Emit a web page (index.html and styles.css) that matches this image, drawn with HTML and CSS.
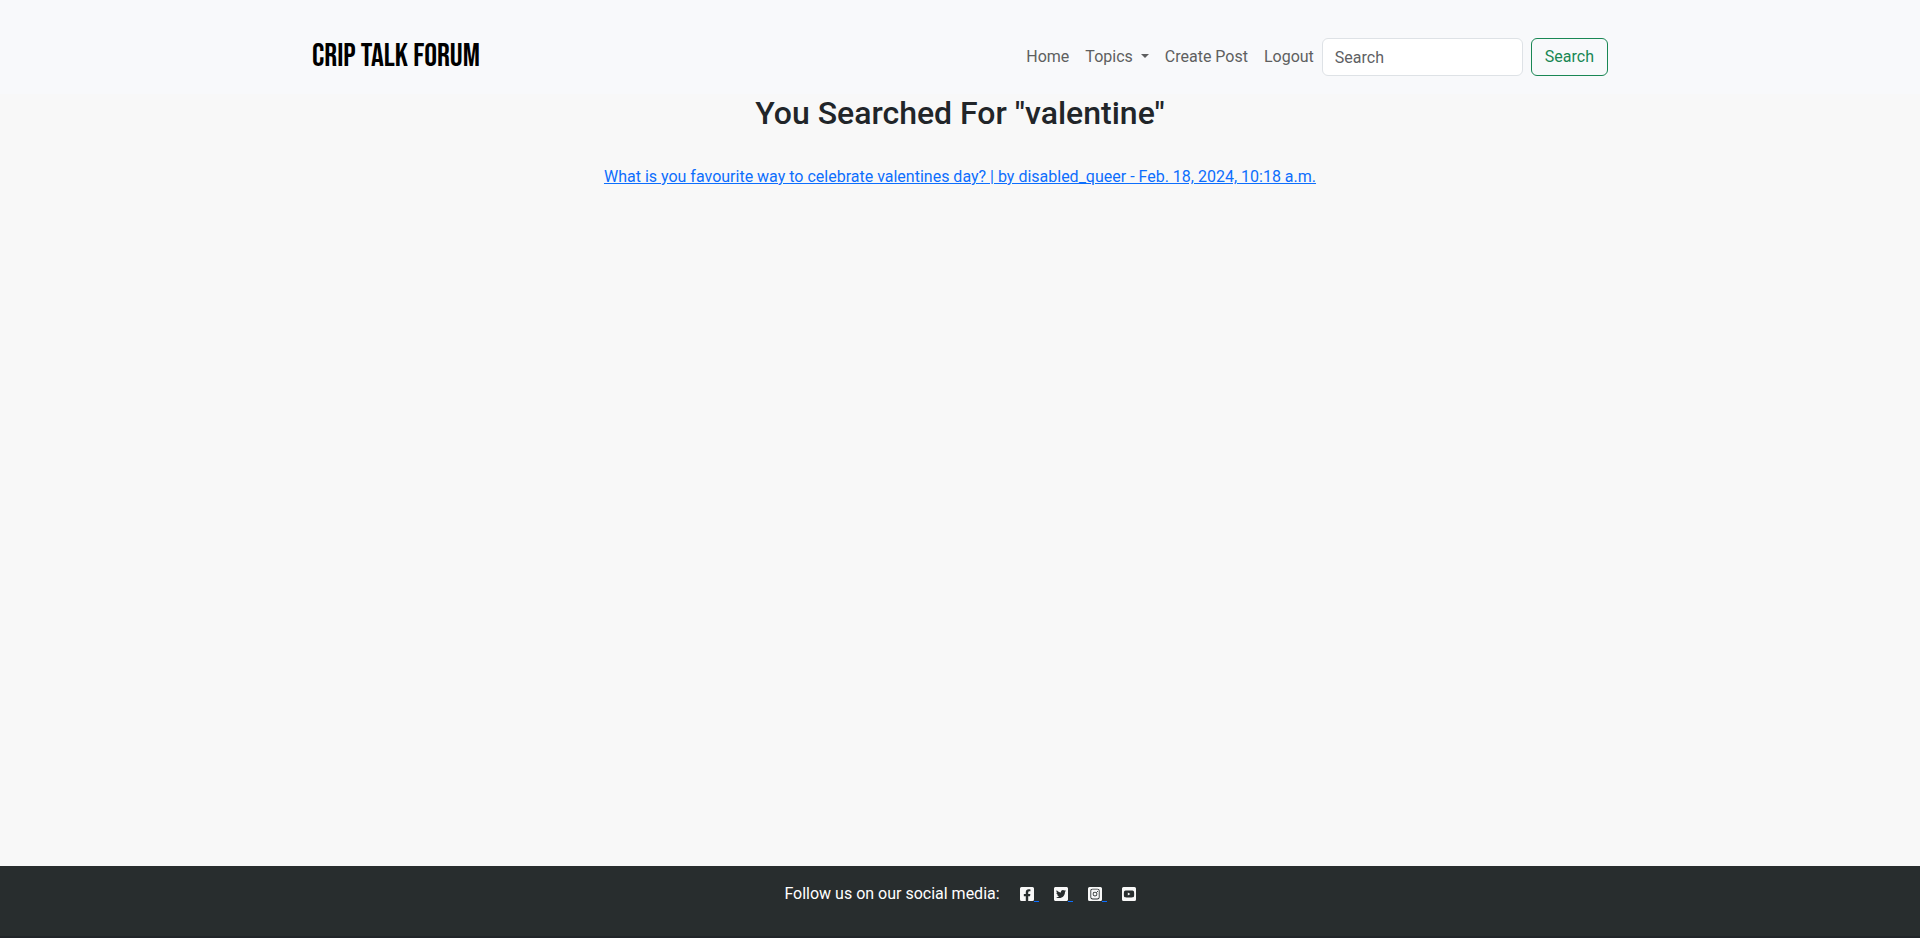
FILE: index.html
```html
<!DOCTYPE html>
<html lang="en">
<head>
<meta charset="utf-8">
<meta name="viewport" content="width=device-width, initial-scale=1">
<title>Crip Talk Forum</title>
<link rel="stylesheet" href="styles.css">
</head>
<body>
<header class="navbar">
  <div class="container">
    <a class="brand" href="#">CRIP TALK FORUM</a>
    <nav class="menu">
      <a class="nav-link" href="#">Home</a>
      <a class="nav-link dropdown" href="#">Topics</a>
      <a class="nav-link" href="#">Create Post</a>
      <a class="nav-link" href="#">Logout</a>
      <form class="search" role="search">
        <input class="search-input" type="search" placeholder="Search" aria-label="Search">
        <button class="search-button" type="submit">Search</button>
      </form>
    </nav>
  </div>
</header>
<main class="results">
  <h1 class="title">You Searched For "valentine"</h1>
  <a class="result" href="#">What is you favourite way to celebrate valentines day? | by disabled_queer - Feb. 18, 2024, 10:18 a.m.</a>
</main>
<footer class="footer">
  <span class="follow">Follow us on our social media:</span>
  <a class="social trail" href="#" aria-label="Facebook"><svg class="icon" viewBox="0 0 448 512"><path d="M400 32H48A48 48 0 0 0 0 80v352a48 48 0 0 0 48 48h137.250V327.690h-63V256h63v-54.640c0-62.150 37-96.480 93.670-96.480 27.140 0 55.520 4.840 55.520 4.840v61h-31.270c-30.810 0-40.420 19.120-40.420 38.730V256h68.780l-11 71.690h-57.780V480H400a48 48 0 0 0 48-48V80a48 48 0 0 0-48-48z"/></svg></a>
  <a class="social trail" href="#" aria-label="Twitter"><svg class="icon" viewBox="0 0 448 512"><path d="M400 32H48C21.500 32 0 53.500 0 80v352c0 26.500 21.500 48 48 48h352c26.500 0 48-21.500 48-48V80c0-26.500-21.500-48-48-48zm-48.900 158.800c.2 2.800.2 5.700.2 8.500 0 86.700-66 186.600-186.600 186.600-37.200 0-71.700-10.800-100.700-29.400 5.300.6 10.400.8 15.800.8 30.700 0 58.900-10.400 81.400-28-28.800-.6-53-19.500-61.300-45.500 10.100 1.500 19.200 1.500 29.600-1.200-30-6.100-52.500-32.500-52.500-64.400v-.8c8.700 4.900 18.900 7.900 29.600 8.300a65.447 65.447 0 0 1-29.200-54.600c0-12.200 3.200-23.400 8.900-33.100 32.300 39.800 80.800 65.800 135.200 68.600-9.300-44.500 24-80.600 64-80.600 18.900 0 35.900 7.900 47.900 20.700 14.800-2.800 29-8.300 41.600-15.800-4.900 15.200-15.200 28-28.800 36.100 13.200-1.400 26-5.100 37.800-10.200-8.900 13.100-20.100 24.700-32.900 34z"/></svg></a>
  <a class="social trail" href="#" aria-label="Instagram"><svg class="icon" viewBox="0 0 448 512"><path fill-rule="evenodd" d="M48 32h352a48 48 0 0 1 48 48v352a48 48 0 0 1-48 48H48a48 48 0 0 1-48-48V80a48 48 0 0 1 48-48zM145 84C94 84 76 110 76 160v192c0 50 25 76 75 76h146c50 0 75-26 75-76V160c0-50-25-76-75-76zM150 111h148c34 0 47 17 47 47v196c0 30-17 47-47 47H150c-30 0-47-17-47-47V158c0-30 17-47 47-47zM224 180a76 76 0 1 0 0 152 76 76 0 0 0 0-152zm0 27a49 49 0 1 1 0 98 49 49 0 0 1 0-98zM304 158a18 18 0 1 0 0 36 18 18 0 0 0 0-36z"/></svg></a>
  <a class="social" href="#" aria-label="YouTube"><svg class="icon" viewBox="0 0 448 512"><path fill-rule="evenodd" d="M400 32H48a48 48 0 0 0-48 48v352a48 48 0 0 0 48 48h352a48 48 0 0 0 48-48V80a48 48 0 0 0-48-48zM224 144c-60 0-112 2-129 7-15 4-26 15-30 30-6 22-6 55-6 75s0 54 6 76c4 15 15 25 30 29 17 5 69 7 129 7s112-2 129-7c15-4 26-14 30-29 6-22 6-56 6-76s0-53-6-75c-4-15-15-26-30-30-17-5-69-7-129-7zM186 210l82 46-82 47z"/></svg></a>
</footer>
</body>
</html>
```
FILE: styles.css
```css
* { box-sizing: border-box; }
body {
  margin: 0;
  min-height: 100vh;
  display: flex;
  flex-direction: column;
  background: #f8f8f8;
  color: #212529;
  font: 16px/24px Roboto, "Liberation Sans", sans-serif;
}
.navbar { background: #f8f9fb; padding: 33px 0 13px; }
.container {
  max-width: 1320px;
  margin: 0 auto;
  padding: 0 12px;
  display: flex;
  align-items: center;
  justify-content: space-between;
}
.brand {
  color: #000;
  font: 32px/48px "Bebas Neue", "Liberation Sans Narrow", sans-serif;
  text-decoration: none;
}
.menu, .search { display: flex; align-items: center; }
.nav-link { padding: 8px; color: #5e5f60; text-decoration: none; }
.dropdown::after {
  content: "";
  display: inline-block;
  margin-left: 8px;
  vertical-align: 4px;
  border: 4px solid transparent;
  border-top-color: currentColor;
  border-bottom: 0;
}
.search { gap: 8px; }
.search-input {
  width: 201px;
  height: 38px;
  padding: 6px 12px;
  border: 1px solid #dee2e6;
  border-radius: 6px;
  background: #fff;
  color: #212529;
  font: inherit;
}
.search-input::placeholder { color: #5e6164; opacity: 1; }
.search-button {
  height: 38px;
  padding: 6px 13px;
  border: 1px solid #198754;
  border-radius: 6px;
  background: transparent;
  color: #198754;
  font: inherit;
}
.results { flex: 1; display: flex; flex-direction: column; align-items: center; gap: 32px; }
.title { margin: 0; font-size: 32px; line-height: 39px; font-weight: 500; }
.result { color: #0d6efd; }
.footer {
  display: flex;
  justify-content: center;
  padding: 16px 0 30px;
  border-bottom: 2px solid #212529;
  background: #282d2e;
  color: #fff;
}
.follow { margin-right: 20px; }
.social { display: flex; align-items: center; width: 34px; color: #0d6efd; }
.social:last-child { width: 14px; }
.trail::after { content: ""; align-self: flex-end; width: 5px; height: 1px; margin-bottom: 4px; background: currentColor; }
.icon { width: 14px; height: 16px; fill: #f8f8f8; }
```
